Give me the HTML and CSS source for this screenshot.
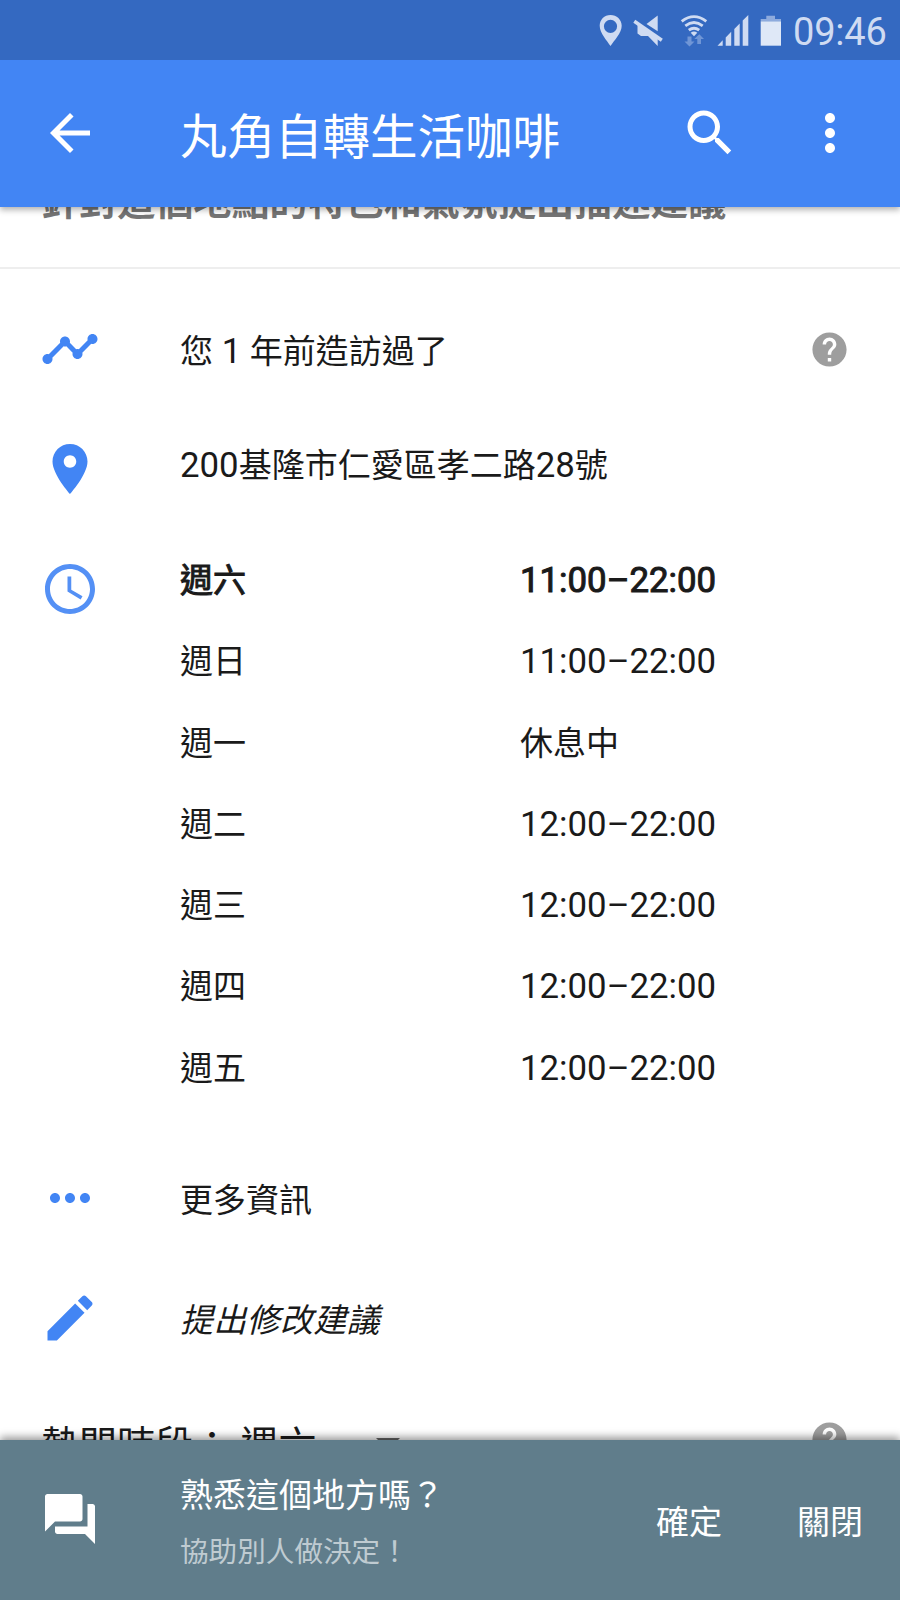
FILE: index.html
```html
<!DOCTYPE html>
<html lang="zh-Hant">
  <head>
    <meta charset="UTF-8" />
    <meta name="viewport" content="width=device-width, initial-scale=1.0" />
    <title>丸角自轉生活咖啡</title>
    <link rel="stylesheet" href="styles.css">
  </head>
  <body>
    <div class="screen">
      <div class="status-bar">
        <svg width="24" height="32" viewBox="599 15 24 32">
          <path fill-rule="evenodd" d="M610.500 15C604.300 15 599.700 19.700 599.700 25.700C599.700 33 607 40.500 610.500 46C614 40.500 621.700 33 621.700 25.700C621.700 19.700 616.700 15 610.500 15zM610.500 19.700a6.600 6.600 0 1 1 0 13.200a6.600 6.600 0 0 1 0-13.200z" />
        </svg>
        <svg class="mute" width="32" height="32" viewBox="632 15 32 32">
          <path d="M646.500 24L657.700 15.500V31.300zM637.500 24.500L657.700 38V46L648 36H641L637.500 33.500z" />
          <path class="slash" d="M634.300 21.300L661.800 40.200" />
        </svg>
        <svg class="wifi" width="28" height="32" viewBox="680 15 28 32">
          <path class="wave" d="M681.700 21.300Q694 12 706.300 21.300M685.300 25.800Q694 19.300 702.700 25.800M688.800 30.200Q694 26.300 699.200 30.200" />
          <path d="M690.700 32.800Q694 30.300 697.300 32.800L694 36.300z" />
          <path class="dim" d="M687.500 36.500h4v5h3l-5 5l-5-5h3zM697.300 44v-5h-3l5-4.700l4.700 4.700h-3v5z" />
        </svg>
        <svg class="signal" width="32" height="32" viewBox="717 15 32 32">
          <path d="M717.500 45.700l5.200-5.500v5.500zM725.700 45.700v-8.300l5.500-5.700v14zM734.300 45.700v-16.700l5.400-5.500v22.200zM742.700 45.700v-25.200l5.600-5.500v30.700z" />
        </svg>
        <svg class="battery" width="22" height="32" viewBox="760 15 22 32">
          <path class="cap" d="M766.300 15.700h8.700v3.300h6v2.300h-20.300v-2.300h5.600z" />
          <path d="M760.700 21.300h20.300v24.400h-20.300z" />
        </svg>
        <span class="clock">09:46</span>
      </div>

      <header class="app-bar">
        <svg class="icon" viewBox="0 0 24 24"><path d="M20 11H7.830l5.590-5.590L12 4l-8 8 8 8 1.410-1.410L7.830 13H20v-2z" /></svg>
        <h1>丸角自轉生活咖啡</h1>
        <svg class="icon" viewBox="0 0 24 24"><path d="M15.500 14h-.79l-.28-.27C15.410 12.590 16 11.110 16 9.500 16 5.910 13.090 3 9.500 3S3 5.910 3 9.500 5.910 16 9.500 16c1.610 0 3.090-.59 4.230-1.570l.27.28v.79l5 4.990L20.490 19l-4.990-5zm-6 0C7.010 14 5 11.990 5 9.500S7.010 5 9.500 5 14 7.010 14 9.500 11.990 14 9.500 14z" /></svg>
        <svg class="icon more" viewBox="0 0 24 24"><path d="M12 8c1.100 0 2-.9 2-2s-.9-2-2-2-2 .9-2 2 .9 2 2 2zm0 2c-1.100 0-2 .9-2 2s.9 2 2 2 2-.9 2-2-.9-2-2-2zm0 6c-1.100 0-2 .9-2 2s.9 2 2 2 2-.9 2-2-.9-2-2-2z" /></svg>
      </header>

      <main class="content">
        <div class="suggest">針對這個地點的特色和氣氛提出描述建議</div>

        <section class="info">
          <div class="row visited">
            <svg class="icon" viewBox="0 0 24 24"><path d="M23 8c0 1.100-.9 2-2 2-.18 0-.35-.02-.51-.07l-3.560 3.550c.05.160.07.340.07.520 0 1.100-.9 2-2 2s-2-.9-2-2c0-.18.020-.36.070-.52l-2.550-2.550c-.16.050-.34.070-.52.070s-.36-.02-.52-.07l-4.550 4.560c.05.160.07.330.07.510 0 1.100-.9 2-2 2s-2-.9-2-2 .9-2 2-2c.18 0 .35.020.51.070l4.560-4.550C8.020 9.360 8 9.180 8 9c0-1.100.9-2 2-2s2 .9 2 2c0 .18-.02.360-.07.520l2.550 2.550c.16-.05.340-.07.520-.07s.36.020.52.070l3.550-3.560C19.020 8.350 19 8.180 19 8c0-1.100.9-2 2-2s2 .9 2 2z" /></svg>
            <span class="text">您<span class="num"> 1 </span>年前造訪過了</span>
            <svg class="help" viewBox="0 0 24 24"><path d="M12 2C6.480 2 2 6.480 2 12s4.480 10 10 10 10-4.480 10-10S17.520 2 12 2zm1 17h-2v-2h2v2zm2.070-7.750l-.9.920C13.450 12.900 13 13.500 13 15h-2v-.5c0-1.100.45-2.100 1.170-2.830l1.240-1.260c.37-.36.590-.86.590-1.410 0-1.100-.9-2-2-2s-2 .9-2 2H8c0-2.210 1.790-4 4-4s4 1.790 4 4c0 .88-.36 1.680-.93 2.250z" /></svg>
          </div>

          <div class="row address">
            <svg class="icon" viewBox="0 0 24 24"><path d="M12 2C8.130 2 5 5.130 5 9c0 5.250 7 13 7 13s7-7.750 7-13c0-3.870-3.130-7-7-7zm0 9.500c-1.380 0-2.500-1.120-2.500-2.500s1.120-2.500 2.500-2.500 2.500 1.120 2.500 2.500-1.120 2.500-2.500 2.500z" /></svg>
            <span class="text"><span class="num">200</span>基隆市仁愛區孝二路<span class="num">28</span>號</span>
          </div>

          <div class="hours">
            <svg class="icon" viewBox="0 0 24 24"><path d="M11.990 2C6.470 2 2 6.480 2 12s4.470 10 9.990 10C17.520 22 22 17.520 22 12S17.520 2 11.990 2zM12 20c-4.420 0-8-3.580-8-8s3.580-8 8-8 8 3.580 8 8-3.580 8-8 8zm.5-13H11v6l5.250 3.150.75-1.230-4.500-2.670z" /></svg>
            <div class="days">
              <div class="day today"><span>週六</span><span class="num">11:00–22:00</span></div>
              <div class="day"><span>週日</span><span class="num">11:00–22:00</span></div>
              <div class="day"><span>週一</span><span>休息中</span></div>
              <div class="day"><span>週二</span><span class="num">12:00–22:00</span></div>
              <div class="day"><span>週三</span><span class="num">12:00–22:00</span></div>
              <div class="day"><span>週四</span><span class="num">12:00–22:00</span></div>
              <div class="day"><span>週五</span><span class="num">12:00–22:00</span></div>
            </div>
          </div>

          <div class="row">
            <svg class="icon" viewBox="0 0 24 24"><path d="M6 10c-1.100 0-2 .9-2 2s.9 2 2 2 2-.9 2-2-.9-2-2-2zm12 0c-1.100 0-2 .9-2 2s.9 2 2 2 2-.9 2-2-.9-2-2-2zm-6 0c-1.100 0-2 .9-2 2s.9 2 2 2 2-.9 2-2-.9-2-2-2z" /></svg>
            <span class="text">更多資訊</span>
          </div>

          <div class="row">
            <svg class="icon" viewBox="0 0 24 24"><path d="M3 17.250V21h3.750L17.810 9.940l-3.750-3.750L3 17.250zM20.710 7.040c.39-.39.390-1.020 0-1.410l-2.340-2.340c-.39-.39-1.020-.39-1.410 0l-1.830 1.830 3.750 3.750 1.830-1.830z" /></svg>
            <span class="text edit">提出修改建議</span>
          </div>
        </section>

        <div class="popular">
          <span class="label">熱門時段： 週六</span>
          <i class="arrow"></i>
          <svg class="help" viewBox="0 0 24 24"><path d="M12 2C6.480 2 2 6.480 2 12s4.480 10 10 10 10-4.480 10-10S17.520 2 12 2zm1 17h-2v-2h2v2zm2.070-7.750l-.9.920C13.450 12.900 13 13.500 13 15h-2v-.5c0-1.100.45-2.100 1.170-2.830l1.240-1.260c.37-.36.590-.86.590-1.410 0-1.100-.9-2-2-2s-2 .9-2 2H8c0-2.210 1.790-4 4-4s4 1.790 4 4c0 .88-.36 1.680-.93 2.250z" /></svg>
        </div>
      </main>

      <footer class="prompt">
        <svg class="icon" viewBox="0 0 24 24"><path d="M21 6h-2v9H6v2c0 .55.450 1 1 1h11l4 4V7c0-.55-.45-1-1-1zm-4 6V3c0-.55-.45-1-1-1H3c-.55 0-1 .45-1 1v14l4-4h10c.55 0 1-.45 1-1z" /></svg>
        <div class="question">
          <p>熟悉這個地方嗎？</p>
          <p class="sub">協助別人做決定！</p>
        </div>
        <span class="action">確定</span>
        <span class="action">關閉</span>
      </footer>
    </div>
  </body>
</html>
```
FILE: styles.css
```css
body {
  margin: 0;
  font-family: Roboto, "Noto Sans CJK TC", sans-serif;
  font-size: 33px;
  color: #1a1a1a;
  background-color: #fff;
}
p, h1 {
  margin: 0;
}
.screen {
  display: flex;
  flex-direction: column;
  width: 900px;
  height: 1600px;
  overflow: hidden;
}
.icon {
  flex: none;
  width: 60px;
  height: 60px;
  fill: #4285f4;
}
.help {
  flex: none;
  width: 41px;
  height: 41px;
  fill: #9e9e9e;
}
.num {
  font-size: 34.8px;
}

/* status bar */
.status-bar {
  display: flex;
  flex: none;
  align-items: center;
  height: 60px;
  padding: 0 12px 0 599px;
  box-sizing: border-box;
  background-color: #3469c1;
  fill: #cfdbf2;
}
.status-bar svg {
  flex: none;
  margin-top: 2px;
}
.status-bar .mute {
  margin-left: 9px;
}
.slash {
  stroke: #cfdbf2;
  stroke-width: 3.5;
}
.status-bar .wifi {
  margin-left: 16px;
}
.wave {
  fill: none;
  stroke: #cfdbf2;
  stroke-width: 2.8;
}
.dim {
  fill: #7096d6;
}
.status-bar .signal {
  margin-left: 9px;
}
.status-bar .battery {
  margin-left: 11px;
  fill: #dfe8f7;
}
.cap {
  fill: #8eabdd;
}
.clock {
  margin: 4px 0 0 11px;
  font-size: 38px;
  line-height: 60px;
  letter-spacing: -0.2px;
  color: #cfdbf2;
}

/* app bar */
.app-bar {
  display: flex;
  flex: none;
  align-items: center;
  height: 147px;
  padding: 0 40px;
  position: relative;
  z-index: 1;
  box-sizing: border-box;
  background-color: #4285f4;
  box-shadow: 0 3px 6px rgba(0, 0, 0, 0.3);
  clip-path: inset(0 0 -12px 0);
}
.app-bar .icon {
  margin-bottom: 1px;
  fill: #fff;
}
.app-bar h1 {
  flex: 1;
  margin-left: 80px;
  font-size: 47.5px;
  font-weight: 400;
  color: #fff;
}
.app-bar .more {
  margin-left: 60px;
}

/* content, scrolled under the app bar */
.content {
  flex: 1;
  min-height: 0;
  overflow: hidden;
}
.suggest {
  height: 95px;
  margin-top: -35px;
  padding-left: 41px;
  border-bottom: 2px solid #eee;
  font-size: 38.1px;
  font-weight: 700;
  line-height: 60px;
  color: #757575;
}
.info {
  padding-top: 23px;
}
.row {
  display: flex;
  align-items: center;
  height: 120px;
  padding: 0 50px 0 40px;
}
.visited,
.address {
  height: 114px;
}
.address .icon {
  margin-top: 12px;
}
.text {
  flex: 1;
  margin-left: 80px;
}
.edit {
  font-style: italic;
  letter-spacing: 0.3px;
}
.hours {
  display: flex;
  height: 602px;
  margin-top: 16px;
  padding-left: 40px;
}
.hours .icon {
  margin-top: 23px;
  opacity: 0.9;
}
.days {
  margin: 4px 0 0 80px;
}
.day {
  display: grid;
  grid-template-columns: 340px 200px;
  height: 81.3px;
  line-height: 81.3px;
}
.today {
  -webkit-text-stroke: 1px #1a1a1a;
}
.popular {
  display: flex;
  align-items: center;
  height: 70px;
  margin-top: 26px;
  padding: 0 50px 0 41px;
  font-size: 38px;
}
.label {
  padding-top: 4px;
}
.arrow {
  margin: 10px auto 0 60px;
  border: 12px solid transparent;
  border-top-color: #666;
  border-bottom: 0;
}

/* bottom prompt */
.prompt {
  display: flex;
  flex: none;
  align-items: center;
  height: 160px;
  padding: 0 37px 0 40px;
  position: relative;
  box-sizing: border-box;
  color: #fff;
  background-color: #607d8b;
  box-shadow: 0 -3px 8px rgba(0, 0, 0, 0.4);
}
.prompt .icon {
  margin-bottom: 2px;
  fill: #fff;
}
.question {
  flex: 1;
  margin: 7px 0 0 80px;
}
.question p {
  line-height: 56px;
}
.question .sub {
  font-size: 28.6px;
  color: #bfcbd1;
}
.action {
  margin-left: 75px;
}
```
